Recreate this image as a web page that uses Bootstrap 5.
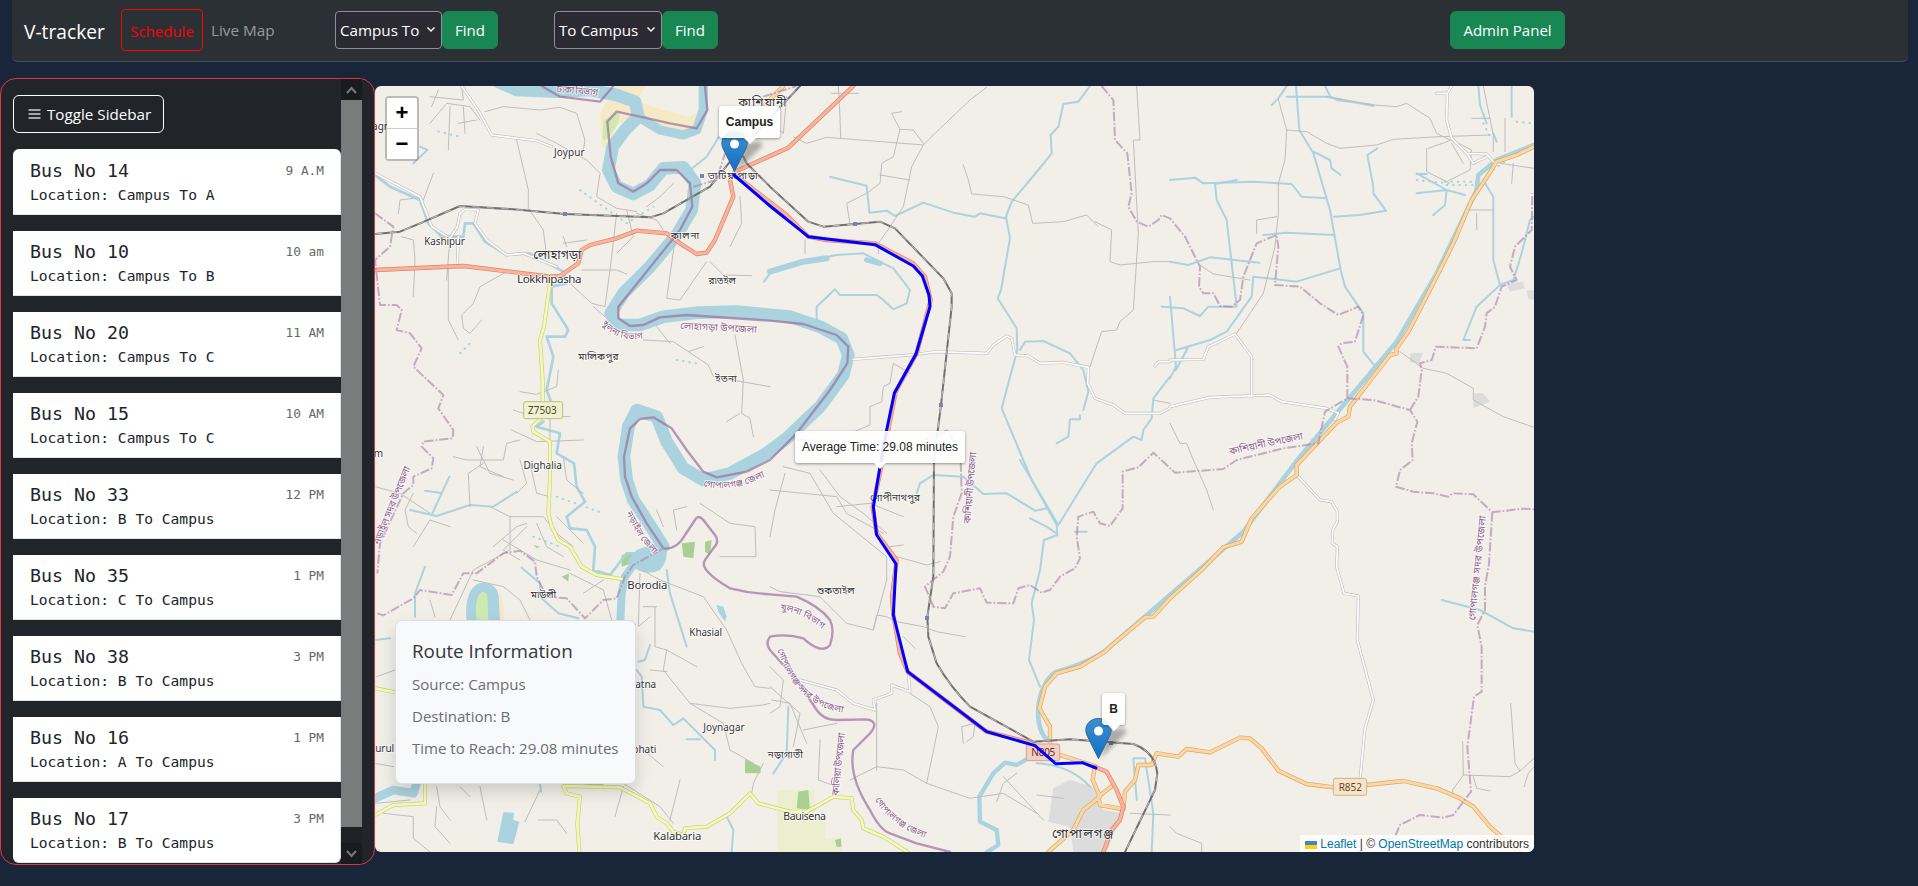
<!DOCTYPE html>
<html lang="en">
<head>
<meta charset="utf-8">
<meta name="viewport" content="width=device-width, initial-scale=1">
<title>V-tracker</title>
<link href="https://cdn.jsdelivr.net/npm/bootstrap@5.3.0/dist/css/bootstrap.min.css" rel="stylesheet">
<style>
html,body{height:100%}
body{background:#192538;font-family:"Open Sans","Noto Sans",sans-serif;font-size:15px;line-height:24px;overflow:hidden}
.topbar{height:62px;margin:0 10px 0 12px;background:#2b3035;border-bottom:1px solid #495057;border-radius:0 0 6px 6px;padding:0 0 0 12px}
.brand-name{font-size:19.2px;color:#fff;width:97px;padding-top:3px}
.btn{font-size:15px;height:38px;padding:6px 0;line-height:24px}
.sched{width:82px;height:42px;border:1px solid red;border-radius:4px;color:red;text-align:center;line-height:42px;margin-top:-1px}
.live{color:#989b9d;width:124px;padding-left:8px;font-size:15.3px;margin-top:-2px}
.pick{width:107px;height:38px;background:#2b2a33;border:1px solid #8f8f9d;border-radius:4px;color:#fff;padding:0 5px 0 4px;white-space:nowrap;font-size:15.2px}
.find{width:56px}
.side{width:375px;height:787px;background:#212529;border:1px solid #dc3545;border-radius:16px;overflow:hidden;padding-left:12px;flex:none}
.side-main{width:328px}
.toggle{width:151px;border:1px solid #fff;font-size:15.2px;white-space:nowrap}
.bus{height:65px;padding:9px 16px 0 17px;margin-bottom:16px;background:#fff;border-right:1px solid #dee2e6;border-bottom:1px solid #dee2e6;font-family:"DejaVu Sans Mono",monospace;color:#212529}
.bus:first-child{border-radius:6px 6px 0 0;height:66px;padding-top:10px}
.bus:last-child{border-radius:0 0 6px 6px}
.bus b{font-weight:400;font-size:18.27px}
.bus small{font-size:12.8px;color:#65686b}
.bus p{font-size:14.6px;margin:0}
.bar{width:21px;background:#1e2227}
.bar-end{height:21px;background:#1a1b1f}
.thumb{height:727px;background:#7a7b7c}
.map{width:1159px;height:766px;background:#f2efe9;border-radius:6px;overflow:hidden;position:relative;margin-top:8px;flex:none}
.map>svg{display:block}
.zoomer{position:absolute;left:10px;top:10px;width:34px;border:2px solid rgba(0,0,0,.22);border-radius:4px;background-clip:padding-box}
.zoomer div{height:30px;background:#fff;text-align:center;font:bold 22px/29px "Liberation Sans",sans-serif;color:#000}
.zoomer div:first-child{border-bottom:1px solid #ccc;height:31px;border-radius:2px 2px 0 0}
.route{position:absolute;left:20px;top:534px;width:241px;height:164px;background:#f8f9fa;border:1px solid #dcdfe2;border-radius:7px;padding:18px 16px 0;box-shadow:0 8px 16px rgba(0,0,0,.15);color:#6b6e71;font-size:15.050px;white-space:nowrap}
.route h5{font-size:18.8px;line-height:24px;margin:0 0 9px;color:#33373a;font-weight:400}
.route p{margin:0 0 8px}
.tip{position:absolute;height:32px;line-height:30px;background:rgba(255,255,255,.9);border:1px solid #fff;border-radius:3px;box-shadow:0 1px 3px rgba(0,0,0,.4);font-family:"Liberation Sans",sans-serif;font-size:12px;color:#222;text-align:center;white-space:nowrap}
.tip::after{content:"";position:absolute;top:31px;left:50%;margin-left:-6px;border:6px solid transparent;border-top-color:#fff;border-bottom:0}
.attrib{position:absolute;right:0;bottom:0;width:234px;height:17px;background:rgba(255,255,255,.8);font:12px/18px "Liberation Sans",sans-serif;color:#333;padding-left:5px;white-space:nowrap}
.attrib a{color:#0078a8;text-decoration:none}
#tiles{fill:none;stroke-linejoin:round;stroke-linecap:round}
.wt{stroke:#aad3df;stroke-width:6}
.big{stroke:#aad3df;stroke-width:38}
.gr{stroke:#bdbdbf;stroke-width:3}
.wh{stroke:#fff;stroke-width:5}
.yl{stroke:#f5f9b8;stroke-width:8}
.og{stroke:#fcd6a4;stroke-width:9}
.pk{stroke:#f9b29c;stroke-width:9}
.rl{stroke:#707070;stroke-width:6}
.rd{stroke:#e8e6e2;stroke-width:2;stroke-dasharray:22 22;stroke-linecap:butt}
.bd{stroke:#ac86ad;stroke-width:6;stroke-opacity:.65;stroke-dasharray:28 6 5 6;stroke-linecap:butt}
.rb{stroke:#9b6f9e;stroke-width:7;stroke-opacity:.7}
.lb text{font-family:"Noto Sans","Noto Sans Bengali",sans-serif;font-size:30px;fill:#333;stroke:#fff;stroke-width:5;stroke-opacity:.8;paint-order:stroke;text-anchor:middle}
.lb .vi{fill:#8d618b}
.lb .curve{text-anchor:start;font-size:28px}
</style>
</head>
<body>
<nav class="topbar d-flex align-items-center">
  <div class="brand-name">V-tracker</div>
  <div class="sched">Schedule</div>
  <div class="live flex-shrink-0">Live Map</div>
  <div style="width:8px"></div>
  <div class="pick d-flex align-items-center justify-content-between" style="margin-top:-2px">Campus To <svg width="10" height="7" viewBox="0 0 10 7"><path d="M1.500 1.500 5 5l3.500-3.500" fill="none" stroke="#fff" stroke-width="1.500"/></svg></div>
  <button class="btn btn-success find" style="margin-top:-2px">Find</button>
  <div style="width:56px"></div>
  <div class="pick d-flex align-items-center justify-content-between" style="margin-top:-2px;width:108px">To Campus <svg width="10" height="7" viewBox="0 0 10 7"><path d="M1.500 1.500 5 5l3.500-3.500" fill="none" stroke="#fff" stroke-width="1.500"/></svg></div>
  <button class="btn btn-success find" style="margin-top:-2px">Find</button>
  <button class="btn btn-success ms-auto" style="width:115px;margin:-2px 343px 0 0">Admin Panel</button>
</nav>
<main class="d-flex" style="padding-top:16px">
  <aside class="side d-flex">
    <div class="side-main">
      <button class="btn toggle text-white d-flex align-items-center" style="margin:16px 0;padding-left:14px"><svg width="13" height="12" viewBox="0 0 13 12" style="margin-right:6px"><path d="M.500 2h12M.500 6h12M.500 10h12" stroke="#a3a6a8" stroke-width="2"/></svg>Toggle Sidebar</button>
      <div id="buses"></div>
    </div>
    <div class="bar d-flex flex-column">
      <div class="bar-end d-flex justify-content-center align-items-center"><svg width="11" height="8" viewBox="0 0 11 8"><path d="m1 7 4.500-5L10 7" fill="none" stroke="#77787a" stroke-width="2"/></svg></div>
      <div class="thumb"></div>
      <div class="flex-grow-1"></div>
      <div class="bar-end d-flex justify-content-center align-items-center"><svg width="11" height="8" viewBox="0 0 11 8"><path d="m1 1 4.500 5L10 1" fill="none" stroke="#77787a" stroke-width="2"/></svg></div>
    </div>
  </aside>
  <section class="map">
    <svg width="1159" height="766" viewBox="375 86 1159 766">
    <defs>
      <linearGradient id="pinfill" x2="0" y2="1"><stop stop-color="#3e8fce"/><stop offset="1" stop-color="#126fc6"/></linearGradient>
      <g id="pin"><path d="M2 0 24-22Q32-28 24-30L10-29Z" fill="#000" opacity=".28" filter="blur(2px)"/><path d="M0 0-11-22C-16-32-9-40 0-40S16-32 11-22Z" fill="url(#pinfill)" stroke="#2e6c97" stroke-width="1"/><circle cy="-27.500" r="4.500" fill="#fff"/></g>
      <path id="lbl1" d="M695 730Q745 800 855 768"/><path id="lbl2" d="M1000 1218Q1100 1245 1230 1165"/><path id="lbl3" d="M768 1300 805 1370 890 1470"/><path id="lbl4" d="M1230 1590Q1310 1600 1375 1665"/><path id="lbl5" d="M1222 1710Q1290 1915 1480 1898"/><path id="lbl6" d="M1515 2160Q1570 2250 1700 2285"/>
    </defs>
    <g id="tiles" transform="translate(370 80) scale(.333333)">
      <!-- land cover -->
      <g stroke="none">
        <path fill="#f5e9c6" d="M690 100 720 50 740 18H830L800 60 860 85 960 110 990 90 985 150 950 175 830 125 790 110 740 135 715 210 695 200Z"/>
        <path fill="#cdebb0" d="M700 120 750 95 745 130 715 175 698 180Z"/>
        <path fill="#aacf95" d="M935 1390 975 1385 970 1435 940 1430ZM1005 1385 1025 1380 1020 1425 1005 1415ZM755 1425 790 1420 785 1450 755 1460ZM575 1490 597 1480 595 1505ZM1125 2038 1172 2060V2080H1125ZM640 2105H700V2118H645ZM490 1395 510 1400 500 1405Z"/>
        <path fill="#eceed0" d="M1222 2130H1335V2210H1365V2316H1222ZM1317 2275H1415V2316H1317Z"/>
        <path fill="#aacf95" d="M1285 2135 1315 2130 1320 2190 1280 2185ZM1395 2280 1412 2275 1415 2300 1400 2300Z"/>
        <path fill="#dcdcdc" d="M2050 2125 2100 2100 2170 2120 2200 2190 2255 2200 2210 2316H2110L2100 2240 2035 2225ZM3410 612 3460 605 3462 625 3420 635ZM3120 820 3160 818 3145 850 3120 845ZM3310 940 3340 940 3360 965 3310 985ZM3470 632 3492 630V660L3475 658Z"/>
        <path fill="#aad3df" d="M290 1625C280 1530 320 1500 350 1510 400 1520 385 1570 395 1640H300Z"/>
        <path fill="#cdebb0" d="M320 1620C310 1550 335 1520 352 1545L355 1625Z"/>
        <path fill="#f5e9c6" d="M385 1530Q405 1570 402 1625H390Z"/>
        <path fill="#aad3df" d="M800 1410 880 1380Q905 1430 870 1470 820 1495 770 1445ZM400 2197 432 2198 430 2220 448 2225 430 2293 382 2285ZM1040 1575 1060 1580 1070 1610 1065 1625 1045 1595Z"/>
      </g>
      <!-- big meandering river -->
      <g class="big">
        <path d="M385 5 440 30 560 35 660 30 740 45 795 65 805 110 765 150 728 200 715 270 740 320 790 342 840 315 880 265 940 262 975 310 965 390 920 465 840 560 760 640 722 700 740 735 810 735 880 710 980 698 1100 695 1260 710 1350 740 1415 775 1435 825 1420 885 1350 980 1250 1075 1190 1120 1080 1180 1000 1200 940 1165 890 1085 860 1010 800 990 775 1040 762 1130 770 1200 790 1260 830 1320 880 1400"/>
        <path d="M805 110 870 150 940 165 980 150 1000 90V18" stroke-width="28"/>
        <path d="M840 1450 790 1455 765 1490 755 1540 750 1640" stroke-width="24"/>
        <path d="M15 2155 70 2130 130 2140 140 2110" stroke-width="26"/>
        <path d="M1200 575 1300 545 1370 535" stroke-width="18"/><path d="M1490 540 1530 550" stroke-width="16"/>
      </g>
      <!-- streams -->
      <g class="wt">
        <path d="M1200 580 1300 545 1400 525 1480 520 1570 565 1620 630 1610 670 1570 688 1540 660 1520 645 1410 645 1395 628 1340 680 1340 725M1182 605 1200 580"/>
        <path d="M15 285 60 320 150 360 175 430 215 470 280 470 285 430 310 430 345 485 410 525 480 520 580 575 590 610 545 620 545 670 595 750 585 770 530 770 550 830 530 930 545 970M520 1025 500 1040 570 1060 560 1120 612 1150 620 1220 645 1265 590 1310 600 1345 650 1350 675 1400 670 1470 720 1485 770 1420 820 1420" stroke-width="8"/>
        <path d="M150 200 172 210 130 250M1050 165 1010 230 960 270M15 1680 60 1675M120 1290 200 1308 300 1275 370 1280 440 1235M165 1232 210 1238M238 1190 185 1305M165 1460 135 1540 135 1610M455 1463 510 1510 510 1550 565 1600 625 1615M890 1470 900 1540 950 1700M840 1695 825 1740 805 1745M800 1770 815 1790 820 1880 870 1890 910 1935 940 1915 1035 2010V2040M950 1978 990 1978M510 2110 513 2135M1070 2210 1090 2250 1085 2316"/>
        <path d="M1380 290 1490 317 1498 398 1550 392 1575 408 1660 368 1750 398 1815 410 1830 400 1905 415M2160 18 2125 65 2080 72 2065 140 2042 165 2045 220 1980 300 1925 365 1908 410 1920 475 1893 630 1883 655 1940 745 1942 810 1895 985 1985 1200 2060 1335 2062 1365 2022 1380 2010 1470 1985 1570 1992 1620 1977 1740 2010 1820"/>
        <path d="M1950 810 1965 785 2020 783 2100 820 2140 870 2155 935 2140 990M2130 1005V1018H2100L2095 1070 2060 1090M1640 1240 1650 1210 1690 1185 1780 1190 1840 1242 1910 1240 1995 1292 2030 1285M1950 1140 2065 1335 2180 1150 2290 1070 2315 1080 2320 1050 2345 1015 2350 955 2400 890M1980 1315 2030 1340 2060 1360M2600 300 2535 312 2540 360 2570 420 2600 680M2375 680 2440 685 2490 708 2515 680H2600" transform="translate(0 0)"/>
        <path d="M2400 300 2475 293 2500 310 2650 305 2765 312 2795 350 2870 355M2750 18 2725 55 2705 75M2778 18 2788 150 2830 220 2880 390 2912 570 2925 620 2980 700V815L3020 865M2830 215 2880 240 2885 265 2912 285M3022 205 2992 225 3010 320 3010 340 3048 392 2970 405 2892 410M2680 465 2750 458 2895 465M2400 545 2455 555 2520 532 2668 548M2910 565 2780 605 2650 590 2645 650 2570 755 2520 780 2420 810M2400 650 2418 860 2400 895M2418 870 2455 800M2865 18 2880 48 2900 60 3010 75M2750 50 2870 50 3010 78"/>
        <path d="M3325 18 3330 75 3350 130M3425 20V110M3140 280 3230 330 3225 375 3190 405M3140 340 3230 330 3285 345M3345 310 3370 350 3370 540 3390 615 3320 680 3280 780H3300M3492 410 3480 420 3455 520 3430 600 3390 615M3140 282H3170M3370 160 3380 185M3215 1560 3330 1590 3430 1645 3492 1655M2115 1355H2150M2300 2160 2290 2035 2325 2035 2350 2200 2345 2316M2000 2050Q2100 2055 2160 2120"/>
        <path d="M1850 2316 1885 2295 1880 2250 1830 2225 1828 2150 1870 2080 1905 2048 1940 2055 2000 2020" stroke-width="13"/>
        <path d="M2030 1980C1980 1920 2010 1800 2060 1775Q2170 1745 2220 1700L2400 1545 2620 1355 2790 1130 3080 785 3200 580 3320 330 3325 285 3380 240 3492 195" stroke-width="14"/>
        <path d="M1255 1880 1250 2020 1210 2080"/>
      </g>
      <!-- scattered ponds -->
      <path class="wt" stroke-dasharray="2 17" d="M205 155 270 170M630 330 770 430 850 380M270 820 310 780M920 840 980 850M560 1250 700 1300M3140 300 3240 310M3225 305H3310M3230 315H3310M3370 270 3410 240M3340 130 3360 170M3440 125 3490 130M490 1370 570 1400"/>
      <!-- minor roads -->
      <g class="gr">
        <path d="M275 18 280 60 180 50M180 130 230 70 300 80 330 120M345 95 400 80 510 90 570 82 620 100 645 180 640 210M500 160 560 190 650 240 690 280 680 350 740 385 800 395M440 180 475 330 475 385 520 450 530 530M85 400 90 360 130 355M95 470 130 480 135 540 130 650M230 600 240 470M270 470 210 470M235 555 235 720 265 780M410 575 330 620 310 670 275 705 280 745 300 760 335 720M635 570H740L770 582M740 400 720 570 705 680 665 670 600 610M670 680 705 710M910 310 870 350 830 380M820 780 910 785 955 815 1015 855 1030 890 1200 920M955 815 1000 800M860 740 900 790M1095 765 1120 900 1115 1000 1140 1015 1150 1070M1110 1000 1070 1025M1020 545 1060 585 1145 587M915 480 890 655 930 660 1010 545M580 490 650 480M580 470 590 500M450 935 500 943 560 920 565 870M425 1050 500 1085 640 1080M540 1085V1010H600M430 990 460 1000M190 280 160 360M205 30 185 80M240 80 235 210M280 80 285 160M265 130 320 120M1110 350 1115 430 1080 500M770 390 790 470 740 520M800 400 860 420 880 450"/>
        <path d="M15 1220 90 1240 180 1300M300 1280 295 1180 340 1150M130 1240 105 1290 115 1340 140 1360M250 1130 290 1140 400 1140 410 1090 450 1080M360 1280 420 1310V1410L310 1470 240 1620M420 1310H520L560 1360 610 1400M470 1340 400 1410 450 1440M400 1380 500 1440 600 1470M440 1240 470 1210 450 1140M130 1400 180 1320 240 1340M580 1130 590 1200 640 1240M310 1500 400 1520 450 1560 480 1620M180 1560 195 1610M640 1540 700 1500M600 1480 700 1530 725 1620M860 1290 880 1340M920 1350 910 1290 950 1280M990 1270 1080 1330 1155 1340 1158 1430 1050 1430M810 1480 805 1640 840 1610M815 1470 870 1500 1000 1550 1070 1650 1115 1750 1155 1820 1200 1825M855 1580V1700L890 1710 880 1770 960 1870 1080 1885 1180 1875 1200 1870M890 1710 980 1760M840 1770 890 1775M960 1870 1060 1930 1080 2010 1150 2050M15 2170 120 2160M40 2200 130 2210V2275L180 2316M200 2180 195 2240 240 2290M330 2120 350 2220M510 2130 465 2225M735 2210 760 2120M900 2220 930 2100M760 2110 870 2180 910 2230M505 2220 560 2220 590 2260M820 2010 880 2060M15 2050 70 2060M20 1790 75 1770M320 1100 360 1180 430 1200M340 1100 330 1160 400 1190M480 1150 500 1240 540 1250M370 1400 440 1340 470 1330M500 1330 530 1400 580 1430M560 1310 640 1390M200 2120 210 2180 240 2220M270 2120 300 2150M820 1580 860 1580M1180 2050 1150 2110 1145 2140"/>
        <path d="M1210 140 1240 160 1250 50M1270 170 1310 190 1370 172 1660 195M1405 18 1410 110 1412 175M1385 40H1465M1850 22 1800 60 1690 165 1660 195 1625 260 1600 380 1560 440 1525 490V520M1660 190 1630 150 1590 148 1565 100 1595 95M1590 148 1570 230 1535 250 1530 310 1490 340 1430 370 1440 430M1530 285 1620 300M1780 255 1795 300 1805 342 1900 350 1975 375 1988 430 2080 425 2150 405 2185 440M2175 425 2225 450 2220 545 2250 555 2350 545H2400M2300 18 2310 180 2290 180 2305 460 2290 690 2250 725 2240 750 2195 755 2160 860M1305 480V520M1570 850 1560 910 1540 920 1535 965 1500 980V1035L1440 1060M1570 850 1620 880M2350 960 2400 970"/>
        <path d="M1240 1160 1320 1180 1390 1300 1550 1430V1500L1510 1650M1200 1230 1400 1250 1430 1300 1540 1360M1350 1170 1410 1250 1480 1300M1400 1280 1500 1270 1600 1310M1480 1300 1550 1360M1560 1400 1600 1395M1200 1520 1230 1535 1350 1550 1430 1630 1510 1650 1520 1605 1550 1610 1580 1625 1660 1640 1700 1655 1785 1670M1580 1430 1670 1455 1710 1445M1600 1670 1635 1705M1620 1840 1680 1880 1705 1940 1670 2110M1440 2100 1520 2060 1600 2070 1670 2110 1800 2155 1900 2140 2000 2200M1520 1870V2070M1900 2090 2020 2220M1880 2165 1900 2110 1940 2080M2000 2145 2080 2155M2280 2200 2400 2205M2400 2240 2420 2260 2495 2290V2316M1780 1990 1775 1940 1815 1930 1810 1970 1790 1985M1300 1950 1400 1930M1350 1980 1345 2100 1400 2120M1200 1820 1290 1900 1270 2000M1245 1180 1215 1290 1200 1370M1200 1760 1240 1800 1230 1880 1200 1900M1205 1860 1260 1870 1310 1990"/>
        <path d="M2725 58 2750 150 2745 240 2725 310V400L2715 500 2680 640 2600 760M2750 150 2810 155 2870 190 2910 205 3020 195 3070 178 3210 170 3360 165M2870 50 3010 75 3080 80 3110 70 3180 115 3200 160 3240 180M3170 205V275L3230 305 3300 270 3305 210 3245 180 3175 205M3245 190 3280 250M3340 18 3370 165V215M3405 115V215M3360 115H3305M3390 250 3492 265M3430 250 3425 310M3290 390H3370M3320 400V450M3090 815 3160 865 3230 880 3310 925V960L3400 1010 3492 1042M2660 460V420L2720 410M2490 555 2530 582 2640 600M2400 1030 2430 1090 2450 1090 2470 1140 2510 1230 2530 1290M3422 1870 3435 2050 3450 2073 3492 2035M3450 2073 3420 2090 3280 2085 3278 1985M3280 2085 3248 2130V2140M3310 2090 3320 2125 3360 2133M3492 2060 3475 2080 3462 2120"/>
      </g>
      <!-- local paved roads -->
      <g class="wh" data-case="#c0c0c0">
        <path d="M275 18 330 100 365 165 500 182 545 200M15 280 150 350 185 440 240 475 262 440 270 400 285 388 325 390 315 430 350 480 410 525 460 520 560 560M265 470 262 555"/>
        <path d="M1450 838 1620 825 1700 815 1850 820 1870 795 1910 768 1925 775 1935 825 1975 828 2010 850 2080 847 2155 862 2153 910 2175 955 2230 975 2265 1000 2370 1000 2400 985M2355 858 2365 845H2400"/>
        <path d="M2400 840 2500 838 2515 800 2595 762 2645 830V950M2400 980 2520 952 2700 945 2735 965 2870 985 2905 1000 2895 1020M3245 18 3232 40H3200M3232 40 3230 120 3245 175 3290 220 3350 222 3370 245M3290 220 3310 250 3350 230"/>
        <path d="M2780 1185 2850 1260 2885 1265 2902 1295V1325L2888 1350 2887 1390 2902 1400 2900 1460 2922 1540 2965 1548 2962 1680 3010 1860 2985 1945 2970 2100M1290 1800 1400 1830 1450 1870 1515 1890 1510 1860 1565 1840V1815L1620 1835 1615 1785"/>
      </g>
      <g class="yl" data-case="#c8d07c">
        <path d="M540 610 530 680 522 740 510 780 518 900V1010L487 1040 490 1055 540 1085V1200L535 1300 545 1340 565 1380 600 1400 635 1460 680 1485 755 1497M15 1825 75 1837M15 2205 70 2175 165 2170V2110M628 2316 622 2230 630 2150 590 2140 580 2118 750 2122 840 2170 860 2210 890 2230 910 2255 940 2265 945 2245 1010 2240 1080 2200 1140 2140 1165 2170 1260 2195H1310L1390 2150 1445 2155 1450 2190 1475 2220 1480 2245 1540 2270 1612 2316"/>
      </g>
      <g class="og" data-case="#d9a860">
        <path d="M3492 200 3440 225 3380 245 3345 300 3305 360 3250 490 3200 590 3115 755 3080 805V820L3060 825 2940 980 2935 1010 2900 1028 2780 1155V1185L2730 1220 2645 1315 2615 1385 2560 1402 2495 1470 2400 1555 2350 1610 2325 1612 2220 1700 2205 1715 2130 1760 2060 1780 2025 1820 2008 1885 2040 1940V1990M2070 2025 2175 2058 2168 2100 2190 2150 2140 2190 2110 2250 2035 2316M2230 2115 2185 2150 2190 2175 2260 2188 2265 2135 2295 2100 2305 2055H2345L2360 2020 2425 2030 2450 2007 2520 2017 2610 1973 2640 1975 2675 2005 2725 2072 2810 2112 2890 2122 2990 2115 3100 2103 3200 2125 3270 2155 3310 2180 3360 2240 3450 2320M1150 170 1180 80 1240 18"/>
      </g>
      <g class="pk" data-case="#dc836b">
        <path d="M15 570 280 558 420 575 540 590 570 588 625 550 635 510 660 495 740 475 800 452 890 460 930 490 980 522 1010 518 1035 480 1090 350 1080 300 1095 275 1200 228 1255 203 1450 18M1095 285 1250 405 1315 470 1370 480 1515 490 1630 550 1665 590 1682 660 1640 820 1577 935 1534 1160 1508 1280 1520 1360 1580 1440 1566 1550 1570 1605 1590 1720 1613 1775 1850 1955 1990 1990M2175 2060 2210 2075 2240 2130 2260 2180 2250 2220 2225 2250 2200 2316"/>
      </g>
      <g id="rails">
        <path class="rl" d="M15 462 90 455 150 430 270 378 430 388 585 402 840 412 880 400 1020 320 1100 220 1290 18M1120 230 1130 250 1200 320 1315 425 1360 440 1455 432 1530 425 1575 445 1720 595 1745 640V680L1713 975 1692 1140 1690 1490 1672 1610 1675 1670 1700 1750Q1740 1820 1800 1880L1990 1985 2100 1978 2290 1992Q2355 2015 2362 2080L2355 2130 2265 2316"/>
        <path class="rd" d="M15 462 90 455 150 430 270 378 430 388 585 402 840 412 880 400 1020 320 1100 220 1290 18M1120 230 1130 250 1200 320 1315 425 1360 440 1455 432 1530 425 1575 445 1720 595 1745 640V680L1713 975 1692 1140 1690 1490 1672 1610 1675 1670 1700 1750Q1740 1820 1800 1880L1990 1985 2100 1978 2290 1992Q2355 2015 2362 2080L2355 2130 2265 2316"/>
        <path fill="#7a82b0" d="M579 396h12v12h-12zM990 282h12v12h-12zM1449 426h12v12h-12zM1707 969h12v12h-12zM1665 1608h12v12h-12zM2217 1983h12v12h-12z"/>
      </g>
      <!-- administrative boundaries -->
      <path class="rb" d="M515 18 570 50 690 65 730 18M1005 18 1012 90 980 145 900 130 810 110 740 95 712 125 722 230 745 310 790 335 830 310 870 270 920 270 960 310 967 380 930 450 850 550 745 680V715L780 738 820 735 870 712 950 705 1200 722 1300 732 1400 765 1435 800 1432 850 1380 930 1280 1060 1200 1140 1130 1175 1040 1192 1000 1175 950 1110 905 1045 850 1012 810 1017 780 1045 762 1130 765 1190 785 1250 830 1330 880 1405Q920 1410 945 1365L975 1320Q985 1302 1000 1320L1035 1365Q1050 1385 1030 1405L1005 1440Q985 1470 1080 1525 1140 1540 1200 1543L1280 1550Q1350 1580 1380 1620 1395 1650 1380 1695 1355 1725 1300 1675 1250 1660 1200 1670 1185 1690 1200 1710L1280 1800 1340 1890Q1360 1920 1400 1920L1490 1918Q1530 1925 1500 1960L1450 2010Q1435 2090 1500 2190 1530 2250 1560 2260L1640 2290 1740 2316"/>
      <g class="bd">
        <path d="M15 400 70 440 60 500 15 540 30 675H80L95 690 80 750 120 760 155 805 130 860 220 945 205 985 250 1050 248 1075 160 1085 155 1100 190 1135 185 1165 130 1190 130 1215 100 1240 30 1390 22 1480M22 1600 40 1606 130 1555 150 1530 245 1545 280 1480 320 1480 400 1420 450 1412 495 1445 500 1490 530 1550 590 1555 645 1615 700 1560 740 1555 765 1490 790 1455 880 1405M970 320 1040 300 1065 220M1180 50 1280 18M1280 1080 1430 1085"/>
        <path d="M2195 18 2230 60 2235 180 2272 220 2285 340 2275 380 2300 425 2335 440 2365 420 2375 405 2400 415 2445 470 2490 560 2487 620 2500 640 2530 640 2550 678 2585 680 2610 660 2620 590 2660 490 2720 465 2725 500 2715 615 2790 620 2850 670 2905 705 2965 680 2980 705 2955 785 2915 790 2905 800 2932 860V955L2865 995 2845 1090 2740 1105 2600 1140 2560 1167 2415 1178 2350 1118 2305 1162 2258 1175 2258 1285 2220 1338 2190 1330 2170 1295 2125 1310 2120 1370 2130 1435 2115 1465 2070 1490 2040 1530 2015 1538 1980 1515 1945 1525 1930 1570 1850 1568 1830 1525 1750 1540 1725 1585 1690 1580 1665 1520 1720 1475 1740 1430 1750 1310 1775 1240 1772 1140 1735 1050 1650 1085M2932 955 3010 960 3120 990 3142 1025 3125 1090 3128 1140 3090 1170 3078 1220 3130 1235 3190 1240 3235 1250 3248 1240 3310 1243 3367 1297 3460 1286 3492 1288M3120 990 3145 950 3155 870 3150 850 3185 840 3198 800 3320 805 3345 740 3350 700 3375 680 3395 620 3440 600 3420 560 3435 500 3485 450 3487 340M3367 1297 3357 1450 3345 1520 3345 1590 3322 1635 3335 1700V1835L3312 1850 3292 2000 3303 2135 3250 2205 3220 2213 3150 2205 3090 2235 3075 2270 2965 2316"/>
      </g>
      <!-- place names -->
      <g class="lb" stroke="none">
        <text x="30" y="150">agr</text><text x="598" y="227" textLength="92">Joypur</text><text x="224" y="495" textLength="122">Kashipur</text><text x="538" y="609" style="font-size:35px" textLength="194">Lokkhipasha</text><text x="518" y="1166" textLength="115">Dighalia</text><text x="25" y="1132">m</text>
        <text x="832" y="1527" style="font-size:34px" textLength="120">Borodia</text><text x="1007" y="1667" textLength="98">Khasial</text><text x="1062" y="1952" textLength="124">Joynagar</text><text x="922" y="2280" style="font-size:34px" textLength="144">Kalabaria</text><text x="1304" y="2221" style="font-size:32px" textLength="128">Bauisena</text><text x="790" y="1648">a</text><text x="827" y="1823">atna</text><text x="823" y="2018">bhati</text><text x="44" y="2015">urul</text>
        <text x="1177" y="80" style="font-size:36px" textLength="145">কাশিয়ানী</text><text x="1088" y="296" textLength="150">ভাটিয়াপাড়া</text><text x="945" y="477" textLength="85">কালনা</text><text x="562" y="536" style="font-size:38px" textLength="145">লোহাগড়া</text><text x="1056" y="613" textLength="82">রাতইল</text><text x="685" y="841" textLength="120">মালিকপুর</text><text x="1068" y="905" textLength="64">ইতনা</text><text x="520" y="1553" textLength="76">মাউলী</text><text x="1575" y="1263" textLength="150">গোপীনাথপুর</text><text x="1397" y="1541" textLength="114">শুকতাইল</text><text x="1246" y="2034" textLength="105">নড়াগাতী</text><text x="2138" y="2273" style="font-size:39px" textLength="184">গোপালগঞ্জ</text>
        <text class="vi" transform="translate(620 42) rotate(5)" textLength="125">ঢাকা বিভাগ</text><text class="vi" transform="translate(1045 753) rotate(3)" textLength="230">লোহাগড়া উপজেলা</text>
        <text class="vi curve"><textPath href="#lbl1">খুলনা বিভাগ</textPath></text><text class="vi curve"><textPath href="#lbl2">গোপালগঞ্জ জেলা</textPath></text><text class="vi curve"><textPath href="#lbl3">নড়াইল জেলা</textPath></text><text class="vi curve"><textPath href="#lbl4">খুলনা বিভাগ</textPath></text><text class="vi curve"><textPath href="#lbl5">গোপালগঞ্জ সদর উপজেলা</textPath></text><text class="vi curve"><textPath href="#lbl6">গোপালগঞ্জ জেলা</textPath></text>
        <text class="vi" transform="translate(75 1280) rotate(-68)" textLength="250">নড়াইল সদর উপজেলা</text><text class="vi" transform="translate(1810 1225) rotate(-85)" textLength="215">কাশিয়ানী উপজেলা</text><text class="vi" transform="translate(1415 2055) rotate(96) scale(-1 -1)" textLength="190">কালিয়া উপজেলা</text><text class="vi" transform="translate(2690 1101) rotate(-12)" textLength="225">কাশিয়ানী উপজেলা</text><text class="vi" transform="translate(3332 1465) rotate(-84)" textLength="315">গোপালগঞ্জ সদর উপজেলা</text>
      </g>
      <!-- road shields -->
      <g class="lb">
        <rect x="461" y="965" width="117" height="51" rx="6" fill="#eff1d0" stroke="#b9bd86" stroke-width="3"/><text x="517" y="1002" style="fill:#4b4d1d;stroke:none" textLength="86">Z7503</text>
        <rect x="1969" y="1992" width="100" height="50" rx="6" fill="#f3d0c5" stroke="#dc9f8c" stroke-width="3"/><text x="2020" y="2028" style="fill:#6c2c1c;stroke:none" textLength="72">N805</text>
        <rect x="2890" y="2095" width="100" height="51" rx="6" fill="#f6e3cc" stroke="#d3b285" stroke-width="3"/><text x="2941" y="2133" style="fill:#664a1d;stroke:none" textLength="70">R852</text>
      </g>
      <!-- selected bus route -->
      <path stroke="#00f" stroke-width="9" d="M1092 285 1200 378 1315 470 1515 494 1630 558 1657 588 1677 645 1680 680 1638 822 1573 940 1550 1050 1530 1160 1510 1280 1520 1365 1578 1452 1570 1605 1613 1775 1850 1955 1995 1997 2057 2051 2137 2048 2178 2064"/>
    </g>
    <use href="#pin" x="734.500" y="171.500"/><use href="#pin" x="1098.500" y="758.500"/>
    </svg>
    <div class="zoomer"><div>+</div><div>−</div></div>
    <div class="tip fw-bold" style="left:344px;top:20px;width:61px">Campus</div>
    <div class="tip" style="left:420px;top:345px;width:170px">Average Time: 29.08 minutes</div>
    <div class="tip fw-bold" style="left:727px;top:607px;width:23px">B</div>
    <div class="route"><h5>Route Information</h5><p>Source: Campus</p><p>Destination: B</p><p>Time to Reach: 29.08 minutes</p></div>
    <div class="attrib"><svg width="12" height="8" viewBox="0 0 12 8"><path fill="#4c7be1" d="M0 0h12v4H0z"/><path fill="#ffd500" d="M0 4h12v4H0z"/></svg> <a href="#">Leaflet</a> | © <a href="#">OpenStreetMap</a> contributors</div>
  </section>
</main>
<script>
const buses=[['14','9 A.M','Campus To A'],['10','10 am','Campus To B'],['20','11 AM','Campus To C'],['15','10 AM','Campus To C'],['33','12 PM','B To Campus'],['35','1 PM','C To Campus'],['38','3 PM','B To Campus'],['16','1 PM','A To Campus'],['17','3 PM','B To Campus']];
document.getElementById('buses').innerHTML=buses.map(b=>`<div class="bus"><div class="d-flex justify-content-between align-items-center" style="height:24px"><b>Bus No ${b[0]}</b><small>${b[1]}</small></div><p>Location: ${b[2]}</p></div>`).join('');
// Roads get a darker, wider casing under their fill colour.
document.querySelectorAll('[data-case]').forEach(g=>{const c=g.cloneNode(true);c.style.stroke=g.dataset.case;c.style.strokeWidth=parseFloat(getComputedStyle(g).strokeWidth)+4;g.before(c)});
</script>
<script src="https://cdn.jsdelivr.net/npm/bootstrap@5.3.0/dist/js/bootstrap.bundle.min.js"></script>
</body>
</html>
